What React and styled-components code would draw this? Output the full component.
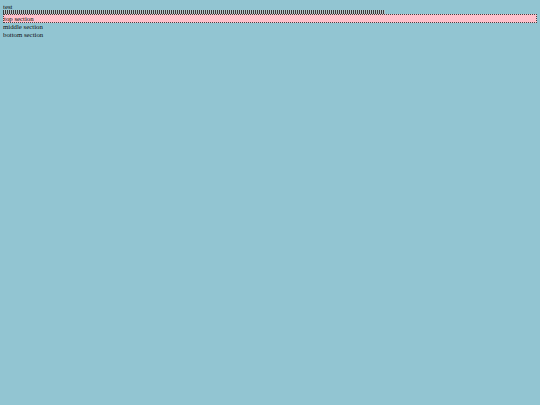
import styled, { createGlobalStyle } from 'styled-components';

const GlobalStyle = createGlobalStyle`
    html, body {
        background: #92C5D2;
    }

    body {
        margin: 3px;
        font-family: 'Liberation Serif', 'Times New Roman', serif;
        font-size: 6.8px;
        line-height: 8px;
        color: #111;
    }
`

export default function App() {
    return (
        <>
            <GlobalStyle />
            <Page>
                <Caption>test</Caption>
                <Ruler />
                <Section $tone="pink" $outlined>top section</Section>
                <Section>middle section</Section>
                <Section>bottom section</Section>
            </Page>
        </>
    )
}

const Page = styled.div`
    display: flex;
    flex-direction: column;
`

const Caption = styled.div`
    line-height: 7px;
`

// thin tick strip above the first section
const Ruler = styled.div`
    width: 382px;
    height: 4px;
    background: repeating-linear-gradient(
        to right,
        #3a3a3a 0px,
        #3a3a3a 1px,
        #b8c4c8 1px,
        #b8c4c8 2px
    );
`

const Section = styled.div`
    background: ${props => props.$tone === 'pink' ? '#FFC0CB' : 'transparent'};
    border: ${props => props.$outlined ? '1px dotted #444' : 'none'};
    line-height: ${props => props.$outlined ? '7px' : '8px'};
`
